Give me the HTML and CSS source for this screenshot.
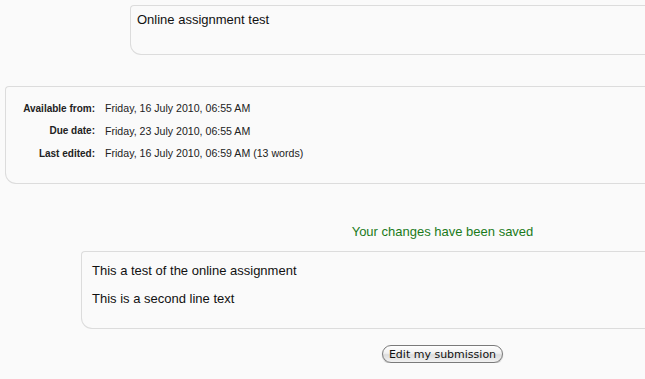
FILE: index.html
```html
<!DOCTYPE html>
<html lang="en">
<head>
  <meta charset="UTF-8" />
  <title>Online assignment test</title>
  <link rel="stylesheet" href="styles.css">
</head>
<body>
  <div class="box intro">
    <p>Online assignment test</p>
  </div>

  <div class="box dates">
    <table>
      <tr><th>Available from:</th><td>Friday, 16 July 2010, 06:55 AM</td></tr>
      <tr><th>Due date:</th><td>Friday, 23 July 2010, 06:55 AM</td></tr>
      <tr><th>Last edited:</th><td>Friday, 16 July 2010, 06:59 AM (13 words)</td></tr>
    </table>
  </div>

  <div class="submission">
    <div class="notice">Your changes have been saved</div>
    <div class="box answer">
      <p>This a test of the online assignment</p>
      <p>This is a second line text</p>
    </div>
    <button class="edit">Edit my submission</button>
  </div>
</body>
</html>
```

FILE: styles.css
```css
html, body {
  margin: 0;
  padding: 0;
  overflow: hidden;
  background: #fafafa;
  font-family: "Liberation Sans", Arial, sans-serif;
  font-size: 13px;
  color: #111;
}

.box {
  background: #fafafa;
  border: 1px solid #dcdcdc;
  border-right: none;
  border-radius: 4px 0 0 11px;
  box-sizing: border-box;
}

.box p {
  margin: 0;
  line-height: 15px;
}

/* Intro */
.intro {
  margin: 5px 0 0 130px;
  height: 50px;
  padding: 6px 6px;
}

/* Dates table */
.dates {
  margin: 31px 0 0 5px;
  height: 98px;
  padding: 10px 0 0 0;
}

.dates table {
  border-collapse: collapse;
  font-size: 10px;
}

.dates th {
  width: 80px;
  text-align: right;
  font-weight: bold;
  padding: 0 10px 0 9px;
  height: 22.5px;
  color: #222;
}

.dates td {
  padding: 0;
  font-size: 10.6px;
  color: #222;
}

/* Submission */
.submission {
  margin-left: 81px;
  width: 723px;
  text-align: center;
}

.notice {
  margin-top: 40px;
  color: #1a7a1a;
  line-height: 16px;
}

.answer {
  margin-top: 11px;
  height: 78px;
  padding: 11px 10px;
  text-align: left;
}

.answer p + p {
  margin-top: 13px;
}

.edit {
  margin-top: 16px;
  height: 18px;
  padding: 0 6px;
  border: 1px solid #7a7a7a;
  border-radius: 9px;
  background: linear-gradient(#ffffff, #f0f0f0 45%, #dcdcdc 55%, #f2f2f2);
  box-shadow: 0 1px 1px rgba(0,0,0,0.25);
  font-family: "DejaVu Sans", sans-serif;
  font-size: 11px;
  color: #111;
  line-height: 15px;
}
```
